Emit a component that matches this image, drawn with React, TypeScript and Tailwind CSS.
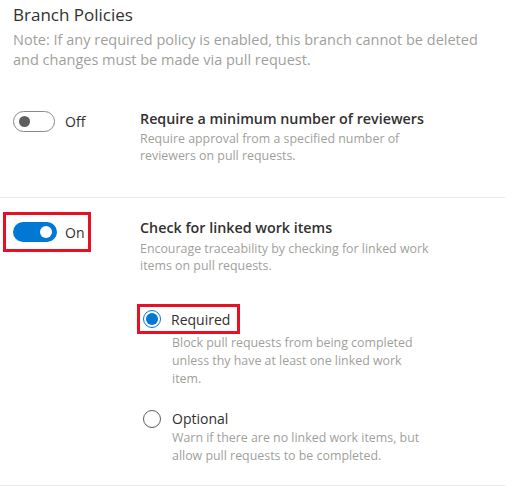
import React from 'react';

const font = { fontFamily: '"Open Sans", "Noto Sans", sans-serif' };

function Toggle({ on }: { on: boolean }) {
	if (on) {
		return (
			<div className="flex h-[20px] w-[44px] items-center justify-end rounded-full bg-[#0078d4] pr-[5px]">
				<div className="h-[12px] w-[12px] rounded-full bg-white" />
			</div>
		);
	}
	return (
		<div className="flex h-[21px] w-[42px] items-center rounded-full border border-[#8a8886] bg-white pl-[5px]">
			<div className="h-[11px] w-[11px] rounded-full bg-[#605e5c]" />
		</div>
	);
}

function Radio({ checked }: { checked: boolean }) {
	return (
		<div
			className={
				checked
					? 'flex h-[18px] w-[18px] items-center justify-center rounded-full border border-[#0078d4]'
					: 'flex h-[18px] w-[18px] items-center justify-center rounded-full border border-[#605e5c]'
			}
		>
			{checked && <div className="h-[12px] w-[12px] rounded-full bg-[#0078d4]" />}
		</div>
	);
}

export default function App() {
	return (
		<div className="h-[488px] w-[518px] overflow-hidden bg-white" style={font}>
			<div className="pl-[13px] pt-[2px]">
				<h1 className="text-[17px] leading-[26px] text-[#323130]">Branch Policies</h1>
				<p className="mt-[2px] text-[14.5px] leading-[20px] text-[#a19f9d]">
					Note: If any required policy is enabled, this branch cannot be deleted
					<br />
					and changes must be made via pull request.
				</p>
			</div>

			<div className="mr-[13px] flex h-[128px] border-b border-[#eaeaea] pt-[41px]">
				<div className="flex w-[140px] items-start pl-[13px]">
					<div className="flex items-center gap-[10px]">
						<Toggle on={false} />
						<span className="text-[14px] text-[#323130]">Off</span>
					</div>
				</div>
				<div className="-mt-[1px]">
					<div className="text-[14.3px] font-semibold leading-[18px] text-[#323130]">
						Require a minimum number of reviewers
					</div>
					<div className="mt-[2px] text-[12.4px] leading-[17px] text-[#a19f9d]">
						Require approval from a specified number of
						<br />
						reviewers on pull requests.
					</div>
				</div>
			</div>

			<div className="mr-[13px] flex h-[288px] border-b border-[#eaeaea] pt-[14px]">
				<div className="w-[140px] pl-[3px]">
					<div className="flex h-[40px] w-[88px] items-center gap-[8px] border-[3px] border-[#e81123] pl-[7px]">
						<Toggle on />
						<span className="text-[14px] text-[#323130]">On</span>
					</div>
				</div>
				<div className="pt-[7px]">
					<div className="text-[14.3px] font-semibold leading-[18px] text-[#323130]">
						Check for linked work items
					</div>
					<div className="mt-[3px] text-[12.4px] leading-[17px] text-[#a19f9d]">
						Encourage traceability by checking for linked work
						<br />
						items on pull requests.
					</div>

					<div className="mt-[30px] -ml-[3px]">
						<div className="flex h-[30px] w-[103px] items-center gap-[10px] border-[3px] border-[#e81123] pl-[3px]">
							<Radio checked />
							<span className="text-[14px] text-[#323130]">Required</span>
						</div>
						<div className="pl-[35px] text-[12.4px] leading-[18px] text-[#a19f9d]">
							Block pull requests from being completed
							<br />
							unless thy have at least one linked work
							<br />
							item.
						</div>
					</div>

					<div className="mt-[20px]">
						<div className="flex items-center gap-[11px] pl-[3px]">
							<Radio checked={false} />
							<span className="text-[14px] text-[#323130]">Optional</span>
						</div>
						<div className="pl-[32px] text-[12.4px] leading-[18px] text-[#a19f9d]">
							Warn if there are no linked work items, but
							<br />
							allow pull requests to be completed.
						</div>
					</div>
				</div>
			</div>
		</div>
	);
}
